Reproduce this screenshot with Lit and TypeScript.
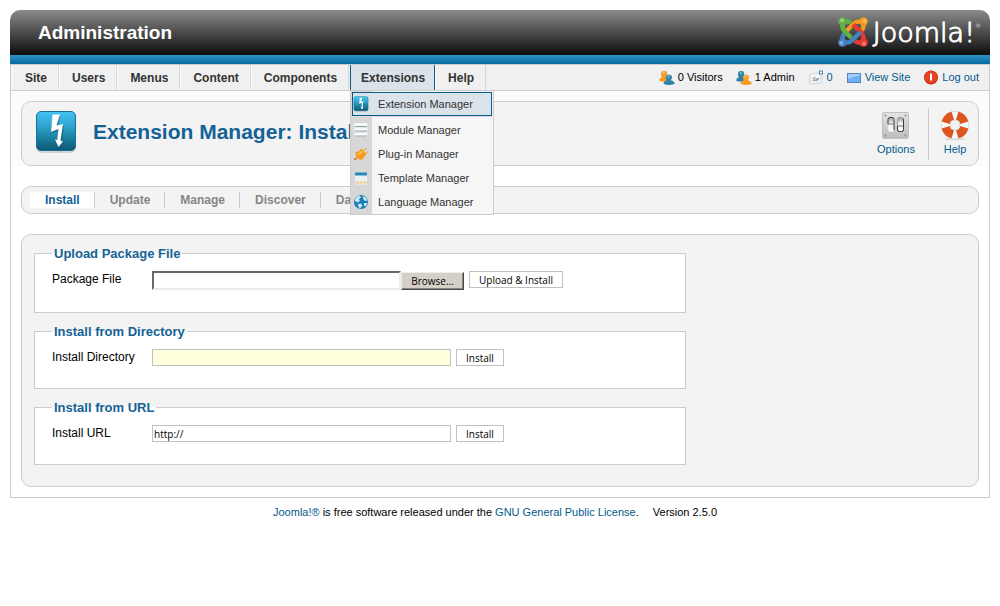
import { LitElement, html, css, svg } from "lit";
import { customElement } from "lit/decorators.js";
import { classMap } from "lit/directives/class-map.js";

const bolt = (uid: string, cls: string) => html`
  <svg class=${cls} viewBox="0 0 42 44" aria-hidden="true">
    <defs>
      <linearGradient id=${uid} x1="0" y1="0" x2="0" y2="1">
        <stop offset="0" stop-color="#45c4f2" />
        <stop offset=".35" stop-color="#30a6d2" />
        <stop offset="1" stop-color="#0a5872" />
      </linearGradient>
    </defs>
    <rect x="1" y="3" width="40" height="40" rx="5" fill="#000" opacity=".13" />
    <rect x="1.500" y="1.500" width="39" height="39" rx="4.500" fill="url(#${uid})" stroke="#176f8d" />
    <path d="M18 6L25.500 6L22.500 17L29 15.500L27 31L29.500 31L24.500 38L20.500 30.500L23.800 31L24.500 20.500L15.500 23.500Z" fill="#05485f" opacity=".5" />
    <path d="M17.500 4.500L25 4.500L21.500 15.500L28 14L25.500 30.500L28 31.500L23.500 37L20 29.500L22.300 30L23.500 19L16 22Z" fill="#fff" />
  </svg>`;

const people = (back: string, front: string) => html`
  <svg class="icon" viewBox="0 0 16 16" aria-hidden="true">
    <path d="M0 10.500Q.500 7.800 3 7.200Q1.800 5.800 2 3.600Q2.400 .8 5.200 .8Q8 .9 8.300 3.700Q8.300 5.900 7 7.200Q10 8 10 10.500Q5 13 0 10.500Z" fill=${back} />
    <circle cx="4.800" cy="3" r="1.400" fill="#fff" opacity=".3" />
    <path d="M4.500 13.800Q4.800 10.800 8 10.200Q6.600 9 6.800 7Q7.200 4.500 10 4.500Q12.800 4.600 13.100 7.100Q13.100 9 11.700 10.200Q15.500 10.800 15.800 13.800Q10 16.300 4.500 13.800Z" fill=${front} />
    <circle cx="9.600" cy="6.700" r="1.400" fill="#fff" opacity=".3" />
  </svg>`;

const mail = html`
  <svg class="icon" viewBox="0 0 16 16" aria-hidden="true">
    <path d="M2 4L11.500 2.500L14 5V13L4 14.500L1 13Z" fill="#e3e6e8" stroke="#d3d6d8" stroke-width=".8" />
    <path d="M3 5L11 4L12.500 11.500L3 12.500Z" fill="#f8f9fa" />
    <path d="M4.500 8.500Q6.500 6 8.500 8.500T11 8.200M4.500 10.500L10.500 9.800M5 8L8 11L10.500 7.800" fill="none" stroke="#8297a6" stroke-width="1" />
    <rect x="11.500" y="1" width="3" height="3" fill="#fff" stroke="#4289b8" />
  </svg>`;

const screen = html`
  <svg class="icon" viewBox="0 0 16 16" aria-hidden="true">
    <rect x="1.500" y="3.500" width="13" height="9" fill="#6faef5" stroke="#5484b8" />
    <path d="M2 4H14V5.500Q8 6 2 9Z" fill="#a5cffb" />
  </svg>`;

const power = html`
  <svg class="icon" viewBox="0 0 16 16" aria-hidden="true">
    <circle cx="8" cy="7.500" r="7" fill="#c82b0c" />
    <circle cx="8" cy="7" r="6.300" fill="#e34320" />
    <rect x="7" y="3.500" width="2" height="7" rx=".6" fill="#fff" />
  </svg>`;

const moduleIcon = html`
  <svg class="icon" viewBox="0 0 16 16" aria-hidden="true">
    <rect x="1" y="1" width="14" height="14" fill="#e4e6e7" />
    <path d="M2 2.500H14M2 7.500H14M2 12.500H14" stroke="#fff" stroke-width="2" />
    <path d="M2 4.500H14M2 9H14M2 14H14" stroke="#93a6af" stroke-width="1" />
  </svg>`;

const plugIcon = html`
  <svg class="icon" viewBox="0 0 16 16" aria-hidden="true">
    <path d="M10 5L13.500 2M12 8L15 5.500" stroke="#d9b66c" stroke-width="1.500" />
    <path d="M1 13.500Q2.500 13.500 3.500 12" fill="none" stroke="#d5731a" stroke-width="1.500" />
    <path d="M2 6L5.500 5.500L8.500 2.500L13.500 8L11 11L9.500 13.500Q6 14.500 4 12Q2 9.500 3 7.500Z" fill="#f79d1c" />
    <path d="M4 7.500L6.500 6.800L8.500 4.500L10 6L6 10Z" fill="#fcc04a" />
  </svg>`;

const templateIcon = html`
  <svg class="icon" viewBox="0 0 16 16" aria-hidden="true">
    <rect x="2" y="2" width="12" height="12.500" fill="#eef1f3" />
    <rect x="2" y="2" width="12" height="3.500" fill="#2f86b8" />
    <rect x="2" y="2" width="12" height="1" fill="#6fb5da" />
    <path d="M2.500 12.500H5.500M6.500 12.500H9.500M10.500 12.500H13.500" stroke="#f4c978" stroke-width="2" />
  </svg>`;

const globeIcon = html`
  <svg class="icon" viewBox="0 0 16 16" aria-hidden="true">
    <circle cx="8" cy="8" r="7" fill="#1c7db5" />
    <path d="M2 5Q4 1.500 7 1.500L8 3.500L6 5L7 7L4.500 8.500L2 7ZM9.500 2L13 3.500L14.500 6.500L12 7L10.500 5.500ZM5 10L8 9.500L9.500 11.500L7 14.500L5.500 13ZM11 9L14.500 9L13 12L11 12Z" fill="#c5e6f5" />
  </svg>`;

const switches = html`
  <svg class="tool-icon" viewBox="0 0 28 30" aria-hidden="true">
    <defs>
      <linearGradient id="plate" x1="0" y1="0" x2="0" y2="1">
        <stop offset="0" stop-color="#e4e4e4" /><stop offset="1" stop-color="#bcbcbc" />
      </linearGradient>
      <linearGradient id="rocker" x1="0" y1="0" x2="0" y2="1">
        <stop offset="0" stop-color="#999" /><stop offset=".4" stop-color="#eee" /><stop offset="1" stop-color="#fff" />
      </linearGradient>
    </defs>
    <rect x=".500" y="1.500" width="26" height="26" rx="1.500" fill="url(#plate)" stroke="#c0c0c0" />
    <g fill="#8c8c8c">
      <circle cx="3.500" cy="4.500" r="1" /><circle cx="23.500" cy="4.500" r="1" />
      <circle cx="3.500" cy="24.500" r="1" /><circle cx="23.500" cy="24.500" r="1" />
    </g>
    <rect x="6" y="6.500" width="6" height="14" rx="2" fill="url(#rocker)" stroke="#ddd" />
    <path d="M6 13V8.500Q6 6.500 8 6.500H10Q12 6.500 12 8.500V19" fill="none" stroke="#3a3a3a" />
    <rect x="15.500" y="6.500" width="6" height="14" rx="2" fill="url(#rocker)" stroke="#999" />
    <path d="M15.500 15V18.500Q15.500 20.500 17.500 20.500H19.500Q21.500 20.500 21.500 18.500V8" fill="none" stroke="#3a3a3a" />
    <path d="M6 13H12M15.500 15H21.500" stroke="#777" />
  </svg>`;

const lifebuoy = html`
  <svg class="tool-icon" viewBox="0 0 28 30" aria-hidden="true">
    <ellipse cx="14" cy="28" rx="10" ry="1.500" fill="#000" opacity=".1" />
    <circle cx="14" cy="14" r="9.200" fill="none" stroke="#d0d0d0" stroke-width="9.500" />
    <circle cx="14" cy="14" r="9.200" fill="none" stroke="#f9f9f9" stroke-width="8.200" />
    ${[45, 135, 225, 315].map(
      (a) => svg`<path d="M7 2.200A13.500 13.500 0 0 1 21 2.200L17 9.600A5 5 0 0 0 11 9.600Z" transform="rotate(${a} 14 14)" fill="#de551f" />`
    )}
  </svg>`;

const arm = (color: string, angle: number) => svg`
  <g transform="rotate(${angle} 15 15)">
    <path d="M4.500 5V9.500Q4.500 12 7 14.500L14.500 22" fill="none" stroke="#333" stroke-opacity=".35" stroke-width="5.500" />
    <path d="M4.500 5V9.500Q4.500 12 7 14.500L15 22.500" fill="none" stroke=${color} stroke-width="4.500" />
    <path d="M5 4.500H9.500Q12 4.800 14 7" fill="none" stroke=${color} stroke-width="4.500" />
    <circle cx="4.500" cy="4.500" r="4.300" fill=${color} />
    <circle cx="4" cy="3.300" r="2" fill="#fff" opacity=".35" />
  </g>`;

const joomlaMark = html`
  <svg class="mark" viewBox="0 0 30 30" aria-hidden="true">
    ${arm("#62b145", 0)}${arm("#f79a20", 90)}${arm("#e83b32", 180)}${arm("#4482c4", 270)}
    <path d="M4.500 9Q4.500 12 7 14.500L11 18.500" fill="none" stroke="#62b145" stroke-width="4.500" />
  </svg>`;

const menu = ["Site", "Users", "Menus", "Content", "Components", "Extensions", "Help"];
const tabs = ["Install", "Update", "Manage", "Discover", "Database"];
const extensions = [
  { label: "Extension Manager", icon: bolt("bolt-small", "icon") },
  { label: "Module Manager", icon: moduleIcon },
  { label: "Plug-in Manager", icon: plugIcon },
  { label: "Template Manager", icon: templateIcon },
  { label: "Language Manager", icon: globeIcon },
];

@customElement("app-root")
export class AppRoot extends LitElement {
  static styles = css`
    :host {
      display: block;
      padding: 10px;
      background: #fff;
      color: #000;
      font: 12px/15px "Liberation Sans", Arial, sans-serif;
    }
    * { box-sizing: border-box; }
    a { color: #025a8d; text-decoration: none; }
    ul { list-style: none; margin: 0; padding: 0; }
    h1, h2 { margin: 0; }
    .icon { width: 16px; height: 16px; flex: none; }

    .top {
      display: flex;
      align-items: center;
      justify-content: space-between;
      height: 45px;
      padding: 0 9px 0 28px;
      border-radius: 10px 10px 0 0;
      background: linear-gradient(#8c8c8c, #4b4b4b 50%, #0d0d0d);
      color: #fff;
    }
    .top h1 { font-size: 19px; line-height: 24px; }
    .brand { display: flex; align-items: center; gap: 5px; }
    .mark { width: 30px; height: 30px; margin-bottom: 2px; }
    .word {
      display: flex;
      font: 200 27px/32px "DejaVu Sans", sans-serif;
      -webkit-text-stroke: 1px #fff;
    }
    .word sup { font-size: 6px; line-height: 18px; -webkit-text-stroke: 0; }
    .stripe { height: 9px; background: linear-gradient(#2d93c9, #0b6a9f); }

    .bar {
      display: flex;
      justify-content: space-between;
      height: 27px;
      border: 1px solid #ccc;
      background: #f0f0f0;
    }
    .menu { display: flex; padding-left: 1px; }
    .entry { position: relative; display: flex; border-right: 1px solid #d6d6d6; }
    .entry > a {
      display: flex;
      align-items: center;
      padding: 2px 11px 0 12px;
      border-left: 1px solid #fafafa;
      color: #333;
      font-weight: bold;
    }
    .entry.open { margin-left: 1px; border-color: #0b5a8a; }
    .entry.open > a {
      padding: 2px 9px 0 10px;
      border-left-color: #0b5a8a;
      background: #dae3e9;
    }
    .drop {
      position: absolute;
      z-index: 2;
      top: 26px;
      left: 0;
      width: 144px;
      border: 1px solid #ccc;
      border-top: 0;
      background: linear-gradient(90deg, #d7d7d7 21px, #f6f6f6 21px);
      font-size: 11px;
    }
    .drop a {
      display: flex;
      align-items: center;
      gap: 9px;
      height: 24px;
      padding: 0 2px;
      color: #333;
    }
    .drop li:first-child { padding: 1px 1px 0; border-bottom: 1px solid #ddd; margin-bottom: 1px; }
    .drop li:first-child a {
      padding: 0;
      border: 1px solid #0b5a8a;
      background: #dae3e9;
    }
    .status {
      display: flex;
      align-items: center;
      gap: 13px;
      padding-right: 10px;
      font-size: 11px;
    }
    .status > * { display: flex; align-items: center; gap: 3px; }

    .page { border: 1px solid #ccc; border-top: 0; padding-bottom: 10px; }
    .heading { padding: 10px 10px 0; background: #fbfbfb; }
    .panel { border: 1px solid #ccc; border-radius: 10px; background: #f3f3f3; }
    .toolbar {
      display: flex;
      align-items: center;
      gap: 16px;
      height: 65px;
      padding: 0 0 0 13px;
    }
    .big { width: 42px; height: 44px; margin-bottom: 4px; }
    .toolbar h2 { flex: 1; padding-bottom: 4px; color: #146295; font-size: 21px; line-height: 26px; }
    .tools { display: flex; gap: 3px; font-size: 11px; }
    .tool {
      display: flex;
      flex-direction: column;
      align-items: center;
      width: 46px;
      padding-top: 3px;
    }
    .tool.wide { width: 58px; }
    .tool-icon { width: 28px; height: 30px; margin-bottom: 1px; }
    .rule { width: 1px; height: 52px; background: #ccc; }

    .tabs {
      display: flex;
      align-items: center;
      height: 28px;
      margin: 20px 10px;
      padding: 0 8px;
      font-weight: bold;
    }
    .tabs li { border-right: 1px solid #ccc; }
    .tabs li:last-child { border: 0; }
    .tabs a { display: block; padding: 1px 14px 0 15px; color: #868686; }
    .tabs .current { background: #fff; color: #146295; }

    .forms {
      display: flex;
      flex-direction: column;
      gap: 11px;
      margin: 0 10px;
      padding: 11px 12px 21px;
    }
    fieldset {
      width: 70%;
      min-width: 0;
      margin: 0;
      padding: 10px 17px 22px;
      border: 1px solid #ccc;
      background: #fff;
    }
    legend { padding: 0 2px; color: #146295; font-size: 13px; font-weight: bold; line-height: 15px; }
    .row { display: flex; align-items: flex-start; gap: 5px; }
    .row label { width: 95px; line-height: 17px; }
    .field, button { font: 10px/13px "Open Sans", sans-serif; color: #000; }
    .field {
      width: 299px;
      height: 17px;
      padding: 1px 1px 0;
      border: 1px solid #c0c0c0;
      border-radius: 0;
      background: #fff;
      outline: 0;
    }
    .field.writable { background: #ffffdd; }
    .picker { display: flex; align-items: flex-end; }
    .picker .field {
      width: 249px;
      height: 19px;
      border: 2px solid;
      border-color: #696969 #ebebeb #ebebeb #696969;
    }
    button { height: 17px; padding: 1px 9px 0; border: 1px solid #c0c0c0; background: #fff; }
    .browse {
      width: 63px;
      height: 18px;
      border: 1px solid;
      border-color: #f0eee9 #484848 #484848 #f0eee9;
      box-shadow: inset -1px -1px #8a8782;
      background: #d4d0c8;
    }
    footer {
      display: flex;
      justify-content: center;
      gap: 14px;
      padding: 7px 10px 0 0;
      font-size: 11px;
    }
  `;

  private install(legend: string, label: string, id: string, value: string, writable: boolean) {
    return html`
      <fieldset>
        <legend>${legend}</legend>
        <div class="row">
          <label for=${id}>${label}</label>
          <input class=${classMap({ field: true, writable })} id=${id} type="text" .value=${value} />
          <button type="button">Install</button>
        </div>
      </fieldset>`;
  }

  render() {
    return html`
      <header class="top">
        <h1>Administration</h1>
        <div class="brand">${joomlaMark}<span class="word">Joomla!<sup>®</sup></span></div>
      </header>
      <div class="stripe"></div>
      <nav class="bar">
        <ul class="menu">
          ${menu.map((name) => {
            const open = name === "Extensions";
            return html`<li class=${classMap({ entry: true, open })}>
              <a href="#">${name}</a>
              ${open
                ? html`<ul class="drop">
                    ${extensions.map((e) => html`<li><a href="#">${e.icon}<span>${e.label}</span></a></li>`)}
                  </ul>`
                : ""}
            </li>`;
          })}
        </ul>
        <div class="status">
          <span>${people("#f59a22", "#2f83a8")}0 Visitors</span>
          <span>${people("#2f83a8", "#f59a22")}1 Admin</span>
          <a href="#">${mail}0</a>
          <a href="#">${screen}View Site</a>
          <a href="#">${power}Log out</a>
        </div>
      </nav>
      <main class="page">
        <div class="heading">
          <div class="panel toolbar">
            ${bolt("bolt-large", "big")}
            <h2>Extension Manager: Install</h2>
            <div class="tools">
              <a class="tool wide" href="#">${switches}Options</a>
              <div class="rule"></div>
              <a class="tool" href="#">${lifebuoy}Help</a>
            </div>
          </div>
        </div>
        <ul class="panel tabs">
          ${tabs.map(
            (t, i) => html`<li><a class=${classMap({ current: i === 0 })} href="#">${t}</a></li>`
          )}
        </ul>
        <form class="panel forms">
          <fieldset>
            <legend>Upload Package File</legend>
            <div class="row">
              <label for="package">Package File</label>
              <div class="picker">
                <input class="field" id="package" type="text" />
                <button class="browse" type="button">Browse...</button>
              </div>
              <button type="button">Upload &amp; Install</button>
            </div>
          </fieldset>
          ${this.install("Install from Directory", "Install Directory", "directory", "", true)}
          ${this.install("Install from URL", "Install URL", "url", "http://", false)}
        </form>
      </main>
      <footer>
        <span><a href="#">Joomla!®</a> is free software released under the <a href="#">GNU General Public License</a>.</span>
        <span>Version 2.5.0</span>
      </footer>
    `;
  }
}
